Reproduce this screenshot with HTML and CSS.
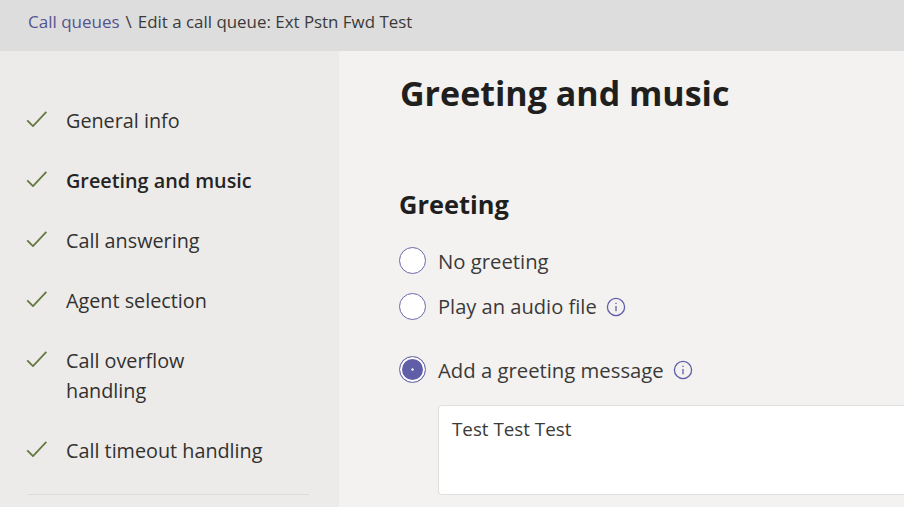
FILE: index.html
```html
<!DOCTYPE html>
<html lang="en">
<head>
<meta charset="utf-8">
<title>Edit a call queue</title>
<link rel="stylesheet" href="styles.css">
</head>
<body>
<header class="topbar"><a class="crumb">Call queues</a><span class="sep">\</span><span class="page">Edit a call queue: Ext Pstn Fwd Test</span></header>
<div class="layout">
  <nav class="side">
    <ul class="steps">
      <li class="step"><svg class="check" viewBox="0 0 24 18"><path d="M1 10.5 L7.5 17 L22.5 1"/></svg><span class="label">General info</span></li>
      <li class="step current"><svg class="check" viewBox="0 0 24 18"><path d="M1 10.5 L7.5 17 L22.5 1"/></svg><span class="label">Greeting and music</span></li>
      <li class="step"><svg class="check" viewBox="0 0 24 18"><path d="M1 10.5 L7.5 17 L22.5 1"/></svg><span class="label">Call answering</span></li>
      <li class="step"><svg class="check" viewBox="0 0 24 18"><path d="M1 10.5 L7.5 17 L22.5 1"/></svg><span class="label">Agent selection</span></li>
      <li class="step"><svg class="check" viewBox="0 0 24 18"><path d="M1 10.5 L7.5 17 L22.5 1"/></svg><span class="label">Call overflow<br>handling</span></li>
      <li class="step"><svg class="check" viewBox="0 0 24 18"><path d="M1 10.5 L7.5 17 L22.5 1"/></svg><span class="label">Call timeout handling</span></li>
    </ul>
    <hr class="rule">
  </nav>
  <main class="main">
    <h1 class="title">Greeting and music</h1>
    <h2 class="section">Greeting</h2>
    <div class="option first"><span class="radio"></span><span class="opt-label">No greeting</span></div>
    <div class="option second"><span class="radio"></span><span class="opt-label">Play an audio file</span><svg class="info" viewBox="0 0 20 20"><circle cx="10" cy="10" r="8.6"/><path d="M10 9v5.2M10 5.7v1.4"/></svg></div>
    <div class="option third"><span class="radio on"></span><span class="opt-label">Add a greeting message</span><svg class="info" viewBox="0 0 20 20"><circle cx="10" cy="10" r="8.6"/><path d="M10 9v5.2M10 5.7v1.4"/></svg></div>
    <div class="textbox">Test Test Test</div>
  </main>
</div>
</body>
</html>
```
FILE: styles.css
```css
* { box-sizing: border-box; }
html, body { margin: 0; height: 100%; overflow: hidden; }
body { font-family: "Open Sans", "Noto Sans", sans-serif; color: #323130; background: #f3f2f1; }
.topbar { height: 51px; background: #dddddd; padding: 8px 0 0 28px; font-size: 17px; line-height: 28px; color: #3b3a39; display: flex; }
.crumb { color: #55548f; }
.sep { margin: 0 5px 0 6px; }
.page { font-size: 16.9px; margin-left: 1px; }
.layout { display: flex; height: 456px; }
.side { width: 339px; flex: none; background: #ecebe9; padding: 54px 30px 0 28px; }
.steps { list-style: none; margin: 0; padding: 0; display: flex; flex-direction: column; gap: 29px; }
.step { display: flex; gap: 18px; font-size: 19.8px; line-height: 30px; }
.label { padding-top: 1px; }
.current { font-weight: 600; color: #252423; font-size: 19.8px; }
.check { width: 22px; height: 16px; flex: none; margin: 6px 0 0 -2px; fill: none; stroke: #64783f; stroke-width: 2; }
.rule { border: 0; border-top: 1px solid #dcdbd9; margin: 28px 0 0; }
.main { flex: 1; padding: 18px 0 0 60px; min-width: 0; }
.title { margin: 0 0 0 1px; font-size: 34px; line-height: 48px; font-weight: 700; color: #201f1e; }
.section { margin: 69px 0 0; font-size: 25.4px; line-height: 36px; font-weight: 700; color: #201f1e; }
.option { display: flex; align-items: center; gap: 12px; font-size: 20.3px; line-height: 30px; color: #3b3a39; }
.opt-label { padding-top: 2px; }
.first { margin-top: 22px; }
.second { margin-top: 14px; }
.third { margin-top: 31px; }
.second .opt-label { font-size: 20.1px; }
.radio { width: 27px; height: 27px; flex: none; border: 1px solid #6b69a8; border-radius: 50%; background: #fff; }
.radio.on { background: radial-gradient(circle, #d8d8ee 0 1px, #5f5ea6 1.5px); box-shadow: inset 0 0 0 2px #fff; }
.info { width: 20px; height: 20px; margin: 2px 0 0 -3px; fill: none; stroke: #5f5ea6; stroke-width: 1.3; }
.textbox { margin: 20px 0 0 39px; height: 90px; background: #fff; border: 1px solid #e1dfdd; border-right: 0; border-radius: 4px 0 0 4px; padding: 8px 13px; font-size: 18.8px; line-height: 30px; color: #3b3a39; }
```
